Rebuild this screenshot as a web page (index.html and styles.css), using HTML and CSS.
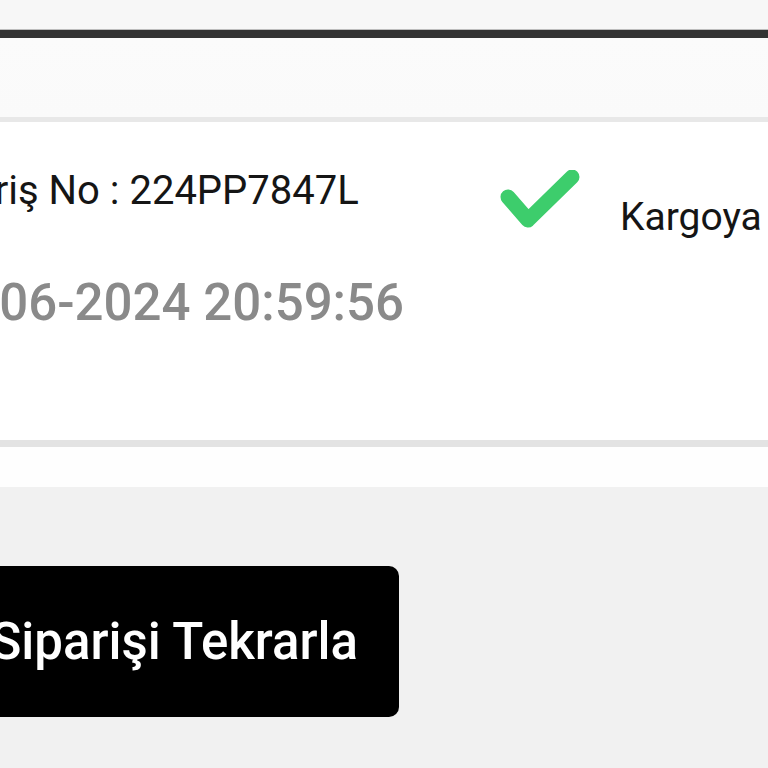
FILE: index.html
```html
<!DOCTYPE html>
<html lang="tr">
<head>
<meta charset="utf-8">
<title>Sipariş Detayı</title>
<link rel="stylesheet" href="styles.css">
</head>
<body>
<div class="page">
  <div class="topbar"></div>
  <div class="divider"></div>
  <div class="header"></div>
  <section class="card">
    <div class="order">
      <div class="order-no">Sipariş No : 224PP7847L</div>
      <div class="order-date">14-06-2024 20:59:56</div>
    </div>
    <div class="status">
      <svg class="check" viewBox="0 0 80 60" width="80" height="60" aria-hidden="true">
        <path d="M8 27 L28 50 L72 7" fill="none" stroke="#3dcd6c" stroke-width="15" stroke-linecap="round" stroke-linejoin="round"/>
      </svg>
      <span class="status-text">Kargoya Verildi</span>
    </div>
  </section>
  <div class="card-foot"></div>
  <div class="actions">
    <button class="reorder">Siparişi Tekrarla</button>
  </div>
</div>
</body>
</html>
```

FILE: styles.css
```css
html, body {
  margin: 0;
  padding: 0;
}

body {
  width: 768px;
  height: 768px;
  overflow: hidden;
  background: #f1f1f1;
  font-family: Roboto, "Noto Sans", "Liberation Sans", sans-serif;
}

.page {
  display: flex;
  flex-direction: column;
}

.topbar {
  height: 30px;
  background: #f7f7f7;
}

.divider {
  height: 8px;
  background: #333333;
  box-shadow: 0 1px 0 #9a9a9a, 0 -1px 0 #bdbdbd;
}

.header {
  height: 79px;
  background: linear-gradient(#fbfbfb, #fafafa);
}

.card {
  display: flex;
  align-items: flex-start;
  box-sizing: border-box;
  height: 330px;
  padding-top: 46px;
  background: #ffffff;
  border-top: 5px solid #e8e8e8;
  border-bottom: 7px solid #e3e3e3;
  white-space: nowrap;
}

.order {
  flex: 0 0 578px;
  margin-left: -78px;
  display: flex;
  flex-direction: column;
}

.order-no {
  margin-left: -5px;
  font-size: 40px;
  line-height: 46px;
  color: #151515;
}

.order-date {
  margin-top: 59px;
  margin-left: 2px;
  font-size: 51px;
  line-height: 60px;
  font-weight: 500;
  color: #8a8a8a;
}

.status {
  display: flex;
  align-items: flex-start;
  gap: 40px;
}

.check {
  display: block;
  margin-top: 2px;
}

.status-text {
  margin-top: 26px;
  font-size: 39px;
  line-height: 46px;
  color: #151515;
}

.card-foot {
  height: 40px;
  background: #fefefe;
}

.actions {
  width: 399px;
  display: flex;
  justify-content: flex-end;
  margin-top: 79px;
}

.reorder {
  flex: 0 0 auto;
  height: 151px;
  padding: 0 41px 0 40px;
  border: none;
  border-radius: 10px;
  background: #000000;
  color: #ffffff;
  font-family: Roboto, "Noto Sans", "Liberation Sans", sans-serif;
  font-size: 51px;
  font-weight: 500;
  white-space: nowrap;
}
```
